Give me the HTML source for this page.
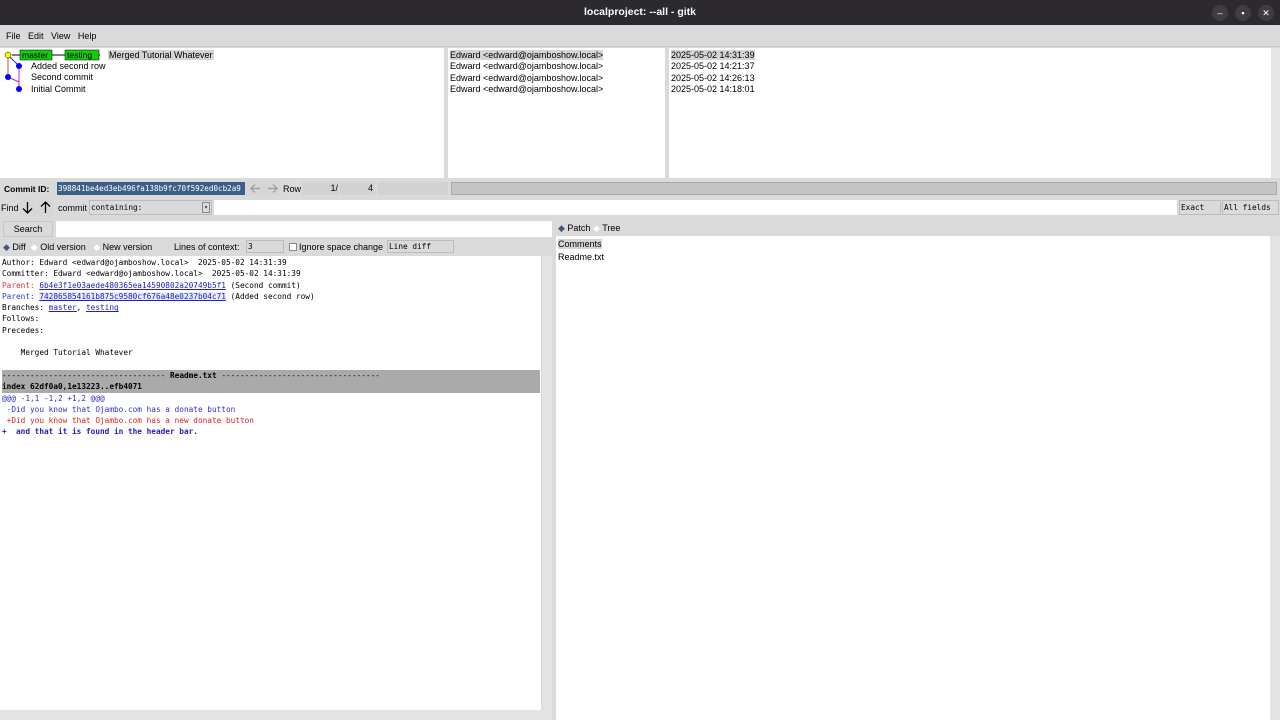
<!DOCTYPE html>
<html><head><meta charset="utf-8"><style>
*{margin:0;padding:0;box-sizing:border-box}
body{width:1280px;height:720px;background:#dadada;font-family:"Liberation Sans",sans-serif;font-size:9px;color:#000;position:relative;overflow:hidden}
.a{position:absolute}
.mono{font-family:"DejaVu Sans Mono","Liberation Mono",monospace;font-size:7.75px}
.w{background:#fff}
.title{left:0;top:0;width:1280px;height:25px;background:#2c2a2e;color:#fff;font-weight:bold;font-size:10.5px;text-align:center;line-height:25px}
.wb{top:5px;width:16px;height:16px;border-radius:8px;background:#3f3d42;color:#fff;font-size:9px;line-height:16px;text-align:center}
.sel{background:#d4d4d4}
.box{background:#dadada;border:1px solid #bbb}
u{color:#2020c0}
.btn{background:#dadada;border:1px solid #c8c8c8}
</style></head><body>
<div class="a title">localproject: --all - gitk</div>
<div class="a wb" style="left:1212px">–</div>
<div class="a wb" style="left:1235px">▪</div>
<div class="a wb" style="left:1258px">✕</div>
<div class="a" style="left:6px;top:31px;word-spacing:5px">File Edit View Help</div>
<div class="a" style="left:0;top:46px;width:1280px;height:1px;background:#c4c4c4"></div>

<div class="a w" style="left:0;top:48px;width:444px;height:130px"></div>
<div class="a w" style="left:448px;top:48px;width:217px;height:130px"></div>
<div class="a w" style="left:669px;top:48px;width:602px;height:130px"></div>
<div class="a" style="left:1271px;top:48px;width:9px;height:130px;background:#e5e5e5"></div>
<svg class="a" style="left:0;top:48px" width="110" height="50">
<line x1="8" y1="7" x2="8" y2="30" stroke="#d09090" stroke-width="1.5"/>
<line x1="8" y1="7" x2="19" y2="18" stroke="#2040a0" stroke-width="1"/>
<line x1="8" y1="29" x2="19" y2="34" stroke="#c020c0" stroke-width="1"/>
<line x1="19" y1="18" x2="19" y2="41" stroke="#c020c0" stroke-width="1"/>
<line x1="12" y1="7" x2="100" y2="7" stroke="#000" stroke-width="1"/>
<circle cx="8" cy="7" r="3" fill="#ff0" stroke="#000" stroke-width=".5"/>
<circle cx="19" cy="18" r="3" fill="#00f"/>
<circle cx="8" cy="29" r="3" fill="#00f"/>
<circle cx="19" cy="41" r="3" fill="#00f"/>
<rect x="20" y="2" width="32" height="10" fill="#1c1" stroke="#000" stroke-width=".5"/>
<rect x="65" y="2" width="34" height="10" fill="#1c1" stroke="#000" stroke-width=".5"/>
<text x="22" y="10" font-size="8.5" font-family="Liberation Sans">master</text>
<text x="67" y="10" font-size="8.5" font-family="Liberation Sans">testing</text>
</svg>
<div class="a sel" style="left:108px;top:50px;padding:0 1px">Merged Tutorial Whatever</div>
<div class="a" style="left:31px;top:61px;line-height:11.3px">Added second row<br>Second commit<br>Initial Commit</div>
<div class="a" style="left:450px;top:50px;line-height:11.3px"><span class="sel">Edward &lt;edward@ojamboshow.local&gt;</span><br>Edward &lt;edward@ojamboshow.local&gt;<br>Edward &lt;edward@ojamboshow.local&gt;<br>Edward &lt;edward@ojamboshow.local&gt;</div>
<div class="a" style="left:671px;top:50px;line-height:11.3px"><span class="sel">2025-05-02 14:31:39</span><br>2025-05-02 14:21:37<br>2025-05-02 14:26:13<br>2025-05-02 14:18:01</div>

<div class="a" style="left:4px;top:184px;font-weight:bold;font-size:8.5px">Commit ID:</div>
<div class="a mono" style="left:57px;top:182px;width:188px;height:13px;background:#3c5f86;color:#fff;line-height:13px;padding-left:1px;overflow:hidden;white-space:nowrap;font-size:7.6px">398841be4ed3eb496fa138b9fc70f592ed0cb2a9</div>
<svg class="a" style="left:247px;top:181px" width="34" height="15">
<rect x="0" y="0" width="17" height="15" fill="#d6d6d6"/><rect x="17" y="0" width="17" height="15" fill="#d6d6d6"/>
<path d="M13 7.5H4M8 3.5L4 7.5L8 11.5" stroke="#999" fill="none" stroke-width="1.2"/>
<path d="M21 7.5H30M26 3.5L30 7.5L26 11.5" stroke="#999" fill="none" stroke-width="1.2"/></svg>
<div class="a" style="left:283px;top:184px">Row</div>
<div class="a" style="left:302px;top:182px;width:36px;height:13px;background:#d2d2d2;text-align:right;line-height:13px">1/</div>
<div class="a" style="left:340px;top:182px;width:35px;height:13px;background:#d2d2d2;text-align:right;line-height:13px;padding-right:2px">4</div>
<div class="a" style="left:378px;top:182px;width:70px;height:13px;background:#d2d2d2"></div>
<div class="a" style="left:451px;top:182px;width:826px;height:13px;background:#c4c4c4;border:1px solid #aaa"></div>

<div class="a" style="left:1px;top:203px">Find</div>
<svg class="a" style="left:19px;top:199px" width="36" height="17">
<rect x="0" y="0" width="17" height="17" fill="#d6d6d6"/><rect x="18" y="0" width="17" height="17" fill="#d6d6d6"/>
<path d="M8.5 3V14M4 9.5L8.5 14L13 9.5" stroke="#000" fill="none" stroke-width="1.3"/>
<path d="M26.5 14V3M22 7.5L26.5 3L31 7.5" stroke="#000" fill="none" stroke-width="1.3"/></svg>
<div class="a" style="left:58px;top:203px">commit</div>
<div class="a box mono" style="left:89px;top:200px;width:123px;height:15px;line-height:14px;padding-left:1px">containing:<span style="position:absolute;right:1px;top:1px;width:8px;height:11px;border:1px solid #888;font-size:6px;line-height:10px;text-align:center">▾</span></div>
<div class="a w" style="left:214px;top:200px;width:963px;height:15px"></div>
<div class="a box mono" style="left:1179px;top:200px;width:42px;height:15px;line-height:14px;padding-left:1px">Exact</div>
<div class="a box mono" style="left:1222px;top:200px;width:57px;height:15px;line-height:14px;padding-left:1px">All fields</div>

<div class="a btn" style="left:3px;top:221px;width:50px;height:16px;text-align:center;line-height:15px">Search</div>
<div class="a w" style="left:56px;top:221px;width:496px;height:16px"></div>
<div class="a" style="left:3px;top:242px;white-space:nowrap"><span style="color:#44557a">◆</span> Diff &nbsp;<span style="color:#fff">◆</span> Old version &nbsp;&nbsp;<span style="color:#fff">◆</span> New version</div>
<div class="a" style="left:174px;top:242px">Lines of context:</div>
<div class="a box mono" style="left:246px;top:240px;width:38px;height:13px;line-height:12px;padding-left:1px">3</div>
<div class="a" style="left:289px;top:243px;width:8px;height:8px;background:#fff;border:1px solid #888"></div>
<div class="a" style="left:299px;top:242px">Ignore space change</div>
<div class="a box mono" style="left:387px;top:240px;width:67px;height:13px;line-height:12px;padding-left:1px">Line diff</div>
<div class="a" style="left:558px;top:223px"><span style="color:#44557a">◆</span> Patch <span style="color:#fff">◆</span> Tree</div>

<div class="a w" style="left:0;top:256px;width:541px;height:454px"></div>
<div class="a" style="left:542px;top:256px;width:10px;height:454px;background:#e3e3e3"></div>
<div class="a" style="left:0;top:710px;width:552px;height:10px;background:#e3e3e3"></div>
<div class="a mono" style="left:2px;top:257px;line-height:11.3px;white-space:pre;width:538px">Author: Edward &lt;edward@ojamboshow.local&gt;  2025-05-02 14:31:39
Committer: Edward &lt;edward@ojamboshow.local&gt;  2025-05-02 14:31:39
<span style="color:#e03030">Parent: </span><u>6b4e3f1e03aede480365ea14590802a20749b5f1</u> (Second commit)
<span style="color:#3040d0">Parent: </span><u style="background:#e6ecfa">742865854161b875c9580cf676a48e0237b04c71</u> (Added second row)
Branches: <u>master</u>, <u>testing</u>
Follows:
Precedes:

    Merged Tutorial Whatever

<span style="display:block;background:#aaa">----------------------------------- <b>Readme.txt</b> ----------------------------------
<b>index 62df0a0,1e13223..efb4071</b></span><span style="color:#3030d0">@@@ -1,1 -1,2 +1,2 @@@</span>
<span style="color:#3030d0"> -Did you know that Ojambo.com has a donate button</span>
<span style="color:#e02020"> +Did you know that Ojambo.com has a new donate button</span>
<b style="color:#2020c0">+  and that it is found in the header bar.</b></div>

<div class="a w" style="left:556px;top:236px;width:714px;height:484px"></div>
<div class="a" style="left:1270px;top:236px;width:10px;height:484px;background:#e3e3e3"></div>
<div class="a" style="left:558px;top:238px;line-height:12.5px"><span class="sel">Comments</span><br>Readme.txt</div>
</body></html>
